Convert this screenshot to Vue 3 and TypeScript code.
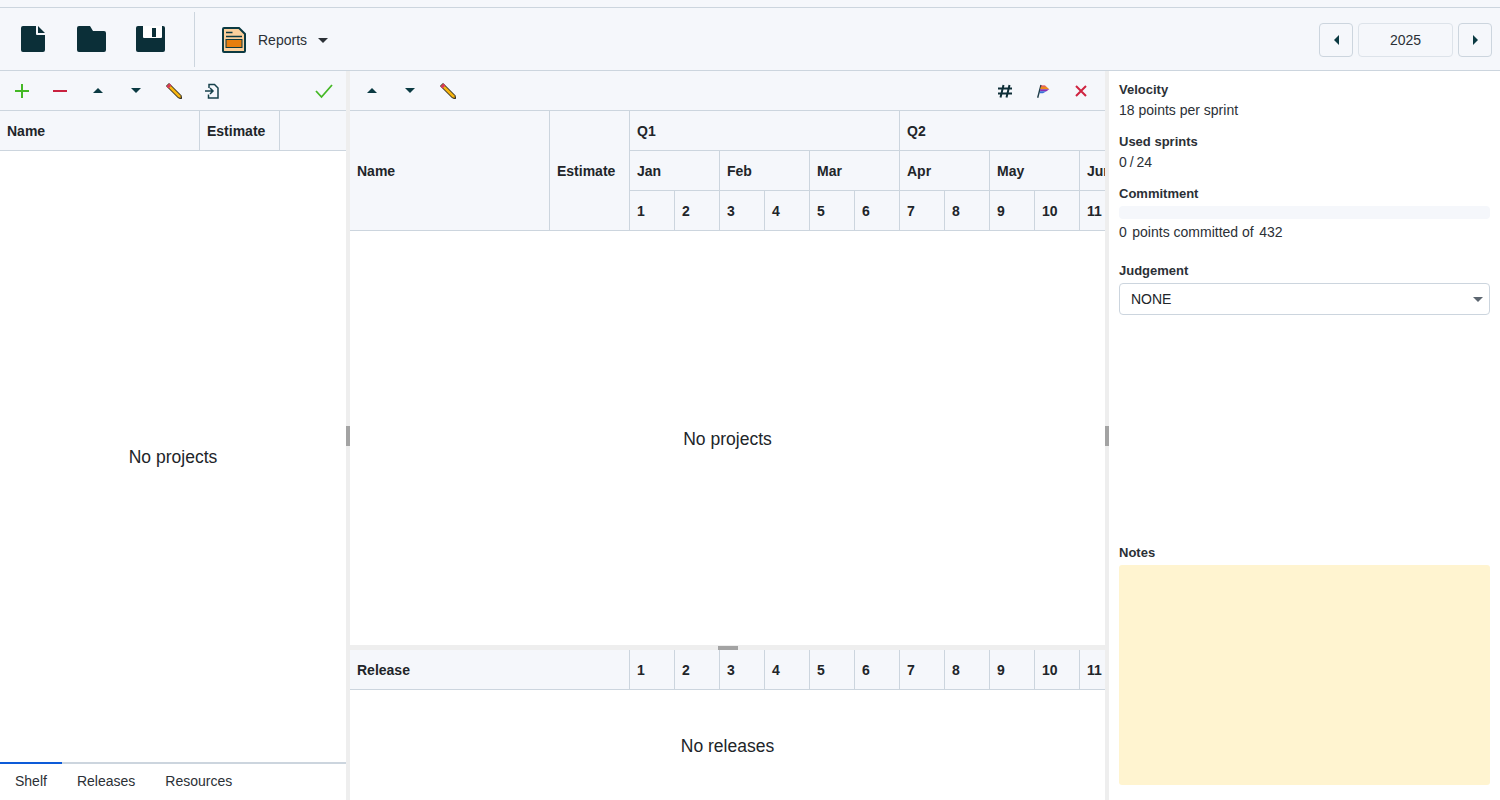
<script setup lang="ts">
const quarters = ['Q1', 'Q2']
const months = ['Jan', 'Feb', 'Mar', 'Apr', 'May', 'Jun']
const sprints = [1, 2, 3, 4, 5, 6, 7, 8, 9, 10, 11]
const tabs = ['Shelf', 'Releases', 'Resources']
</script>

<template>
  <div class="app">
    <header class="topbar">
      <div class="file-tools">
        <button class="icon-btn big">
          <svg width="24" height="26" viewBox="0 0 24 26"><path d="M2 0h13v8a1 1 0 0 0 1 1h8v15a2 2 0 0 1-2 2H2a2 2 0 0 1-2-2V2a2 2 0 0 1 2-2zM17 0l7 7h-7z" fill="#0b2f38" /></svg>
        </button>
        <button class="icon-btn big">
          <svg width="29" height="26" viewBox="0 0 29 26"><path d="M2 0h11l3 5h11a2 2 0 0 1 2 2v17a2 2 0 0 1-2 2H2a2 2 0 0 1-2-2V2a2 2 0 0 1 2-2z" fill="#0b2f38" /></svg>
        </button>
        <button class="icon-btn big">
          <svg width="29" height="26" viewBox="0 0 29 26"><path d="M2 0h25a2 2 0 0 1 2 2v22a2 2 0 0 1-2 2H2a2 2 0 0 1-2-2V2a2 2 0 0 1 2-2z" fill="#0b2f38" /><path d="M7 0h19v11a1 1 0 0 1-1 1H8a1 1 0 0 1-1-1z" fill="#fff" /><rect x="16" y="2" width="4" height="9" fill="#0b2f38" /></svg>
        </button>
      </div>
      <div class="reports">
        <svg width="24" height="26" viewBox="0 0 24 26"><path d="M2 1h15l6 6v17a1 1 0 0 1-1 1H2a1 1 0 0 1-1-1V2a1 1 0 0 1 1-1z" fill="#fbd09c" stroke="#0b3a42" stroke-width="2" /><path d="M4 5.500h6.500M4 9.500h16" stroke="#0b3a42" stroke-width="1.500" /><rect x="4" y="12.500" width="16" height="8" fill="#e67e0e" stroke="#0b3a42" /></svg>
        <span class="reports-label">Reports</span>
        <span class="caret"></span>
      </div>
      <div class="year-nav">
        <button class="year-btn"><span class="tri-left"></span></button>
        <div class="year">2025</div>
        <button class="year-btn"><span class="tri-right"></span></button>
      </div>
    </header>

    <main class="panes">
      <section class="left">
        <div class="toolbar">
          <button class="icon-btn">
            <svg width="16" height="16" viewBox="0 0 16 16"><path d="M8 1v14M1 8h14" stroke="#44b825" stroke-width="2" /></svg>
          </button>
          <button class="icon-btn">
            <svg width="16" height="16" viewBox="0 0 16 16"><path d="M1 8h14" stroke="#c9213f" stroke-width="2" /></svg>
          </button>
          <button class="icon-btn"><span class="tri-up"></span></button>
          <button class="icon-btn"><span class="tri-down"></span></button>
          <button class="icon-btn">
            <svg width="16" height="16" viewBox="0 0 16 16"><path d="M3 .5l12 12 .5 3-3-.5-12-12z" fill="#f7b50f" stroke="#111" /><path d="M.5 3.500l3-3 2 2-3 3z" fill="#d8395a" /></svg>
          </button>
          <button class="icon-btn">
            <svg width="16" height="16" viewBox="0 0 16 16"><path d="M5 5V1.500h5.500L14 5v10H4.500v-3.500" fill="none" stroke="#17424c" stroke-width="1.500" /><path d="M1 8h7.500M6 5l3 3-3 3" fill="none" stroke="#17424c" stroke-width="1.500" /></svg>
          </button>
          <button class="icon-btn push">
            <svg width="18" height="16" viewBox="0 0 18 16"><path d="M1 8l5.500 6L17 2" fill="none" stroke="#44b825" stroke-width="1.800" /></svg>
          </button>
        </div>
        <div class="head-row">
          <div class="cell name-cell">Name</div>
          <div class="cell est-cell">Estimate</div>
        </div>
        <div class="empty">No projects</div>
        <nav class="tabs">
          <span v-for="(t, i) in tabs" :key="t" class="tab" :class="{ active: i === 0 }">{{ t }}</span>
        </nav>
      </section>

      <div class="splitter-v"><span class="grip-v"></span></div>

      <section class="center">
        <div class="toolbar">
          <button class="icon-btn"><span class="tri-up"></span></button>
          <button class="icon-btn"><span class="tri-down"></span></button>
          <button class="icon-btn">
            <svg width="16" height="16" viewBox="0 0 16 16"><path d="M3 .5l12 12 .5 3-3-.5-12-12z" fill="#f7b50f" stroke="#111" /><path d="M.5 3.500l3-3 2 2-3 3z" fill="#d8395a" /></svg>
          </button>
          <button class="icon-btn push">
            <svg width="16" height="16" viewBox="0 0 16 16"><path d="M6.500 2L3.500 14.500M12.500 2l-3 12.500M1 5.500h14M1 10.500h14" stroke="#0f2f38" stroke-width="2" /></svg>
          </button>
          <button class="icon-btn">
            <svg width="16" height="16" viewBox="0 0 16 16"><path d="M2.700 14.700L6 2" stroke="#1f3d48" stroke-width="1.400" /><path d="M6 2.500h4l1.500 1.200H5.800z" fill="#d8283a" /><path d="M5.800 3.700h5.700l2.800 2.600H5.300z" fill="#ef8a1c" /><path d="M5.300 6.300h9l-2.800 1.900H5z" fill="#8a2fb0" /><path d="M5 8.200h6.500L8 10.300H4.700z" fill="#3b6fd8" /></svg>
          </button>
          <button class="icon-btn">
            <svg width="14" height="14" viewBox="0 0 14 14"><path d="M2 2l10 10M12 2L2 12" stroke="#cf2440" stroke-width="2" /></svg>
          </button>
        </div>
        <div class="plan-head">
          <div class="cell plan-name">Name</div>
          <div class="cell plan-est">Estimate</div>
          <div class="cell quarter" v-for="q in quarters" :key="q">{{ q }}</div>
          <div class="cell month" v-for="m in months" :key="m">{{ m }}</div>
          <div class="cell sprint" v-for="s in sprints" :key="s">{{ s }}</div>
        </div>
        <div class="empty">No projects</div>
        <div class="splitter-h"><span class="grip-h"></span></div>
        <div class="release-head">
          <div class="cell release-name">Release</div>
          <div class="cell sprint" v-for="s in sprints" :key="s">{{ s }}</div>
        </div>
        <div class="empty releases">No releases</div>
      </section>

      <div class="splitter-v"><span class="grip-v"></span></div>

      <aside class="right">
        <div class="label">Velocity</div>
        <div class="value">18 points per sprint</div>
        <div class="label">Used sprints</div>
        <div class="value tight">0 / 24</div>
        <div class="label">Commitment</div>
        <div class="bar"></div>
        <div class="value committed"><span>0</span><span>points committed of</span><span>432</span></div>
        <div class="label judgement">Judgement</div>
        <div class="select">NONE<span class="select-caret"></span></div>
        <div class="label notes-label">Notes</div>
        <div class="notes"></div>
      </aside>
    </main>
  </div>
</template>

<style>
body {
  margin: 0;
}
</style>

<style scoped>
.app {
  width: 1500px;
  height: 800px;
  display: flex;
  flex-direction: column;
  overflow: hidden;
  background: #fff;
  color: #212529;
  font-family: 'Liberation Sans', Arial, sans-serif;
  font-size: 14px;
}
button {
  border: 0;
  background: none;
  padding: 0;
  font: inherit;
}
.topbar {
  box-sizing: border-box;
  height: 71px;
  padding: 10px 8px 0 0;
  display: flex;
  align-items: center;
  background: #f5f7fb;
  border-bottom: 1px solid #ccd5de;
  position: relative;
  flex: none;
}
.topbar::before {
  content: '';
  position: absolute;
  left: 0;
  right: 0;
  top: 7px;
  height: 1px;
  background: #ccd5de;
}
.file-tools {
  display: flex;
  align-items: center;
  width: 195px;
  height: 55px;
  margin-top: -1px;
  box-sizing: border-box;
  border-right: 1px solid #ccd5de;
  padding: 0 0 1px 21px;
}
.icon-btn.big:nth-child(1) {
  margin-right: 32px;
}
.icon-btn.big:nth-child(2) {
  margin-right: 30px;
}
.icon-btn {
  display: flex;
  align-items: center;
  justify-content: center;
}
.reports {
  display: flex;
  align-items: center;
  margin-left: 27px;
}
.reports-label {
  margin-left: 12px;
  color: #2b3036;
}
.caret {
  margin-left: 11px;
  margin-top: 1px;
  border-left: 5px solid transparent;
  border-right: 5px solid transparent;
  border-top: 5px solid #2b3036;
}
.year-nav {
  margin-left: auto;
  display: flex;
  gap: 5px;
}
.year-btn {
  box-sizing: border-box;
  width: 34px;
  height: 34px;
  border: 1px solid #ccd5de;
  border-radius: 4px;
  display: flex;
  align-items: center;
  justify-content: center;
}
.year {
  box-sizing: border-box;
  width: 95px;
  height: 34px;
  line-height: 32px;
  text-align: center;
  border: 1px solid #dde3ea;
  border-radius: 4px;
  color: #2b3036;
}
.tri-left {
  border-top: 5px solid transparent;
  border-bottom: 5px solid transparent;
  border-right: 5px solid #0b3a42;
}
.tri-right {
  border-top: 5px solid transparent;
  border-bottom: 5px solid transparent;
  border-left: 5px solid #0b3a42;
}
.tri-up {
  border-left: 5px solid transparent;
  border-right: 5px solid transparent;
  border-bottom: 5px solid #0b3a42;
}
.tri-down {
  border-left: 5px solid transparent;
  border-right: 5px solid transparent;
  border-top: 5px solid #0b3a42;
}
.panes {
  flex: 1;
  min-height: 0;
  display: flex;
}
.left {
  width: 346px;
  display: flex;
  flex-direction: column;
  flex: none;
}
.center {
  width: 755px;
  display: flex;
  flex-direction: column;
  overflow: hidden;
  flex: none;
}
.splitter-v {
  width: 4px;
  background: #eeeeee;
  flex: none;
  display: flex;
  align-items: center;
}
.grip-v {
  display: block;
  width: 4px;
  height: 20px;
  background: #a3a3a3;
}
.toolbar {
  box-sizing: border-box;
  height: 40px;
  flex: none;
  display: flex;
  align-items: center;
  background: #f5f7fb;
  border-bottom: 1px solid #ccd5de;
}
.toolbar .icon-btn {
  width: 38px;
  height: 39px;
}
.toolbar .icon-btn:first-child {
  margin-left: 3px;
}
.push {
  margin-left: auto;
}
.left .push {
  margin-right: 3px;
}
.center .toolbar {
  padding-right: 5px;
}
.head-row {
  box-sizing: border-box;
  display: flex;
  height: 40px;
  flex: none;
  background: #f5f7fb;
  border-bottom: 1px solid #ccd5de;
}
.cell {
  box-sizing: border-box;
  display: flex;
  align-items: center;
  padding-left: 7px;
  font-weight: 700;
  border-right: 1px solid #ccd5de;
  white-space: nowrap;
  overflow: hidden;
}
.name-cell {
  width: 200px;
}
.est-cell {
  width: 80px;
}
.empty {
  flex: 1;
  min-height: 0;
  box-sizing: border-box;
  padding-top: 2px;
  display: flex;
  align-items: center;
  justify-content: center;
  font-size: 17.5px;
}
.tabs {
  flex: none;
  height: 38px;
  box-sizing: border-box;
  display: flex;
  border-top: 2px solid #ccd5de;
}
.tab {
  padding: 0 15px;
  line-height: 34px;
  height: 36px;
  margin-top: -2px;
  border-top: 2px solid transparent;
  color: #2b3036;
}
.tab.active {
  border-top-color: #0d5bd8;
}
.plan-head {
  box-sizing: border-box;
  flex: none;
  display: grid;
  grid-template-columns: 200px 80px repeat(12, 45px);
  grid-template-rows: repeat(3, 40px);
  width: 820px;
  height: 120px;
  background: #f5f7fb;
}
.plan-head .cell {
  border-bottom: 1px solid #ccd5de;
}
.plan-name {
  grid-row: 1 / span 3;
}
.plan-est {
  grid-row: 1 / span 3;
}
.quarter {
  grid-column: span 6;
}
.month {
  grid-column: span 2;
}
.splitter-h {
  flex: none;
  height: 5px;
  background: #eeeeee;
  display: flex;
  justify-content: center;
  align-items: flex-end;
}
.grip-h {
  display: block;
  width: 20px;
  height: 4px;
  background: #a3a3a3;
}
.release-head {
  box-sizing: border-box;
  flex: none;
  display: grid;
  grid-template-columns: 280px repeat(12, 45px);
  grid-template-rows: 39px;
  width: 820px;
  background: #f5f7fb;
  border-bottom: 1px solid #ccd5de;
}
.releases {
  flex: none;
  height: 110px;
}
.right {
  flex: 1;
  box-sizing: border-box;
  padding: 10px 10px 15px;
  display: flex;
  flex-direction: column;
  min-width: 0;
}
.label {
  font-size: 13px;
  font-weight: 700;
  line-height: 17px;
  color: #2b3036;
}
.value {
  line-height: 20px;
  margin: 2px 0 13px;
  color: #2b3036;
}
.tight {
  word-spacing: -1px;
}
.bar {
  height: 13px;
  margin-top: 4px;
  border-radius: 4px;
  background: #f5f7fb;
}
.committed {
  display: flex;
  gap: 5.5px;
  margin: 3px 0 0;
}
.judgement {
  margin-top: 20px;
}
.select {
  box-sizing: border-box;
  height: 32px;
  line-height: 30px;
  margin-top: 4px;
  padding-left: 11px;
  border: 1px solid #ccd5de;
  border-radius: 4px;
  color: #212529;
  position: relative;
}
.select-caret {
  position: absolute;
  right: 6px;
  top: 13px;
  border-left: 5px solid transparent;
  border-right: 5px solid transparent;
  border-top: 5px solid #5c6670;
}
.notes-label {
  margin-top: auto;
}
.notes {
  height: 220px;
  margin-top: 4px;
  border-radius: 3px;
  background: #fff4d0;
}
</style>
